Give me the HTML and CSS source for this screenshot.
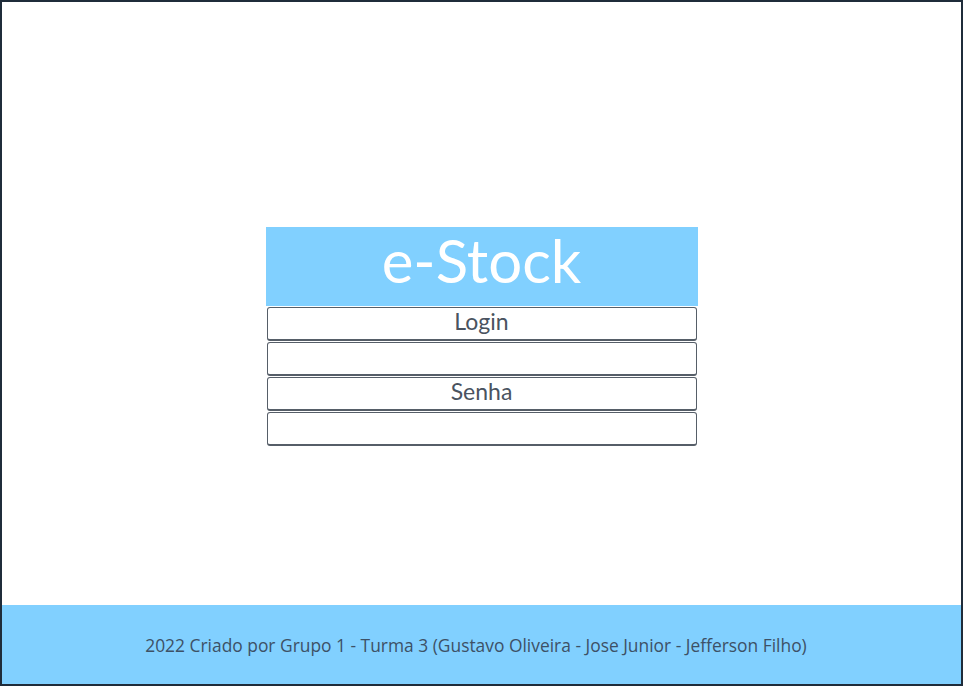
FILE: index.html
```html
<!DOCTYPE html>
<html lang="pt">
<head>
<meta charset="utf-8">
<title>e-Stock</title>
<link rel="stylesheet" href="styles.css">
</head>
<body>
<div class="frame">
  <main class="main">
    <div class="card">
      <div class="brand">e-Stock</div>
      <div class="field label">Login</div>
      <div class="field"></div>
      <div class="field label">Senha</div>
      <div class="field"></div>
    </div>
  </main>
  <footer class="footer">2022 Criado por Grupo 1 - Turma 3 (Gustavo Oliveira - Jose Junior - Jefferson Filho)</footer>
</div>
</body>
</html>
```
FILE: styles.css
```css
html, body {
  margin: 0;
  padding: 0;
  background: #ffffff;
}
.frame {
  box-sizing: border-box;
  width: 963px;
  height: 686px;
  border: 2px solid #1f2c3a;
  display: flex;
  flex-direction: column;
}
.main {
  flex: 1;
  display: flex;
  justify-content: center;
  padding-top: 225px;
  box-sizing: border-box;
}
.card {
  width: 432px;
  display: flex;
  flex-direction: column;
  align-items: center;
}
.brand {
  box-sizing: border-box;
  width: 432px;
  height: 79px;
  padding-top: 3px;
  background: #81d0ff;
  color: #ffffff;
  font-family: Lato, "Open Sans", sans-serif;
  font-size: 60px;
  line-height: 60px;
  text-align: center;
}
.field {
  box-sizing: border-box;
  width: 430px;
  height: 34px;
  margin-top: 1px;
  border: 1px solid #565e68;
  border-bottom-width: 2px;
  border-radius: 3px;
  background: #ffffff;
  font-family: Lato, "Open Sans", sans-serif;
  font-size: 23px;
  color: #4a5360;
  text-align: center;
  line-height: 26px;
}
.footer {
  height: 79px;
  background: #81d0ff;
  display: flex;
  align-items: center;
  justify-content: center;
  font-family: "Open Sans", sans-serif;
  font-size: 17.4px;
  color: #3d5166;
  padding-right: 11px;
}
```
